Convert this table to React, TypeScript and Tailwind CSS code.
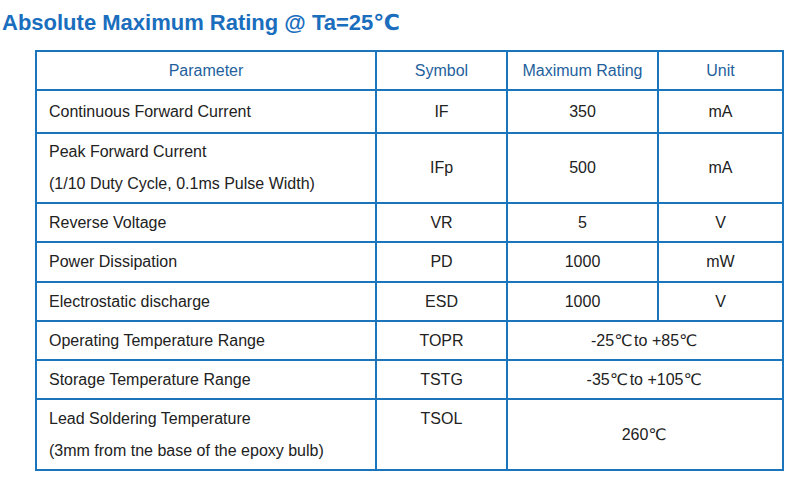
import React from "react";

type Row = {
  param: string[];
  symbol: string;
  rating: React.ReactNode;
  unit?: string;
  h: string;
  symbolTop?: boolean;
};

// degree-celsius sign; Liberation has no glyph for it, DejaVu does
const C = () => (
  <span className="mr-[2px]" style={{ fontFamily: '"DejaVu Sans", sans-serif' }}>
    ℃
  </span>
);

const rows: Row[] = [
  { param: ["Continuous Forward Current"], symbol: "IF", rating: "350", unit: "mA", h: "h-[43px]" },
  {
    param: ["Peak Forward Current", "(1/10 Duty Cycle, 0.1ms Pulse Width)"],
    symbol: "IFp",
    rating: "500",
    unit: "mA",
    h: "h-[70px]",
  },
  { param: ["Reverse Voltage"], symbol: "VR", rating: "5", unit: "V", h: "h-[39px]" },
  { param: ["Power Dissipation"], symbol: "PD", rating: "1000", unit: "mW", h: "h-[40px]" },
  { param: ["Electrostatic discharge"], symbol: "ESD", rating: "1000", unit: "V", h: "h-[39px]" },
  {
    param: ["Operating Temperature Range"],
    symbol: "TOPR",
    rating: (
      <>
        -25<C />{" "}to +85<C />
      </>
    ),
    h: "h-[39px]",
  },
  {
    param: ["Storage Temperature Range"],
    symbol: "TSTG",
    rating: (
      <>
        -35<C />{" "}to +105<C />
      </>
    ),
    h: "h-[39px]",
  },
  {
    param: ["Lead Soldering Temperature", "(3mm from tne base of the epoxy bulb)"],
    symbol: "TSOL",
    rating: (
      <>
        260<C />
      </>
    ),
    h: "h-[71px]",
    symbolTop: true,
  },
];

const cell = "border-r-2 border-b-2 border-[#1a75bc] flex items-center";

export default function App() {
  return (
    <div
      className="w-[800px] h-[489px] bg-white overflow-hidden pt-[9px]"
      style={{ fontFamily: '"Liberation Sans", Arial, "Noto Sans CJK SC", sans-serif' }}
    >
      <h1 className="pl-[2px] h-[28px] text-[22px] leading-[28px] font-bold text-[#1a6ebd]">
        Absolute Maximum Rating @ Ta=25<C />
      </h1>
      <div className="ml-[35px] mt-[13px] w-fit grid grid-cols-[340px_131px_151px_125px] border-l-2 border-t-2 border-[#1a75bc] text-[16px] text-[#222]">
        {["Parameter", "Symbol", "Maximum Rating", "Unit"].map((t) => (
          <div key={t} className={`${cell} h-[39px] justify-center text-[#245f9c]`}>
            {t}
          </div>
        ))}
        {rows.map((r) => (
          <React.Fragment key={r.symbol}>
            <div className={`${cell} ${r.h} pl-[12px]`}>
              <div className="flex flex-col">
                {r.param.map((p) => (
                  <span key={p} className="leading-[32px]">
                    {p}
                  </span>
                ))}
              </div>
            </div>
            <div className={`${cell} ${r.h} justify-center`}>
              {r.symbolTop ? (
                <div className="flex flex-col">
                  <span className="leading-[32px]">{r.symbol}</span>
                  <span className="leading-[32px]">&nbsp;</span>
                </div>
              ) : (
                r.symbol
              )}
            </div>
            {r.unit ? (
              <>
                <div className={`${cell} ${r.h} justify-center`}>{r.rating}</div>
                <div className={`${cell} ${r.h} justify-center`}>{r.unit}</div>
              </>
            ) : (
              <div className={`${cell} ${r.h} col-span-2 justify-center`}>{r.rating}</div>
            )}
          </React.Fragment>
        ))}
      </div>
    </div>
  );
}
